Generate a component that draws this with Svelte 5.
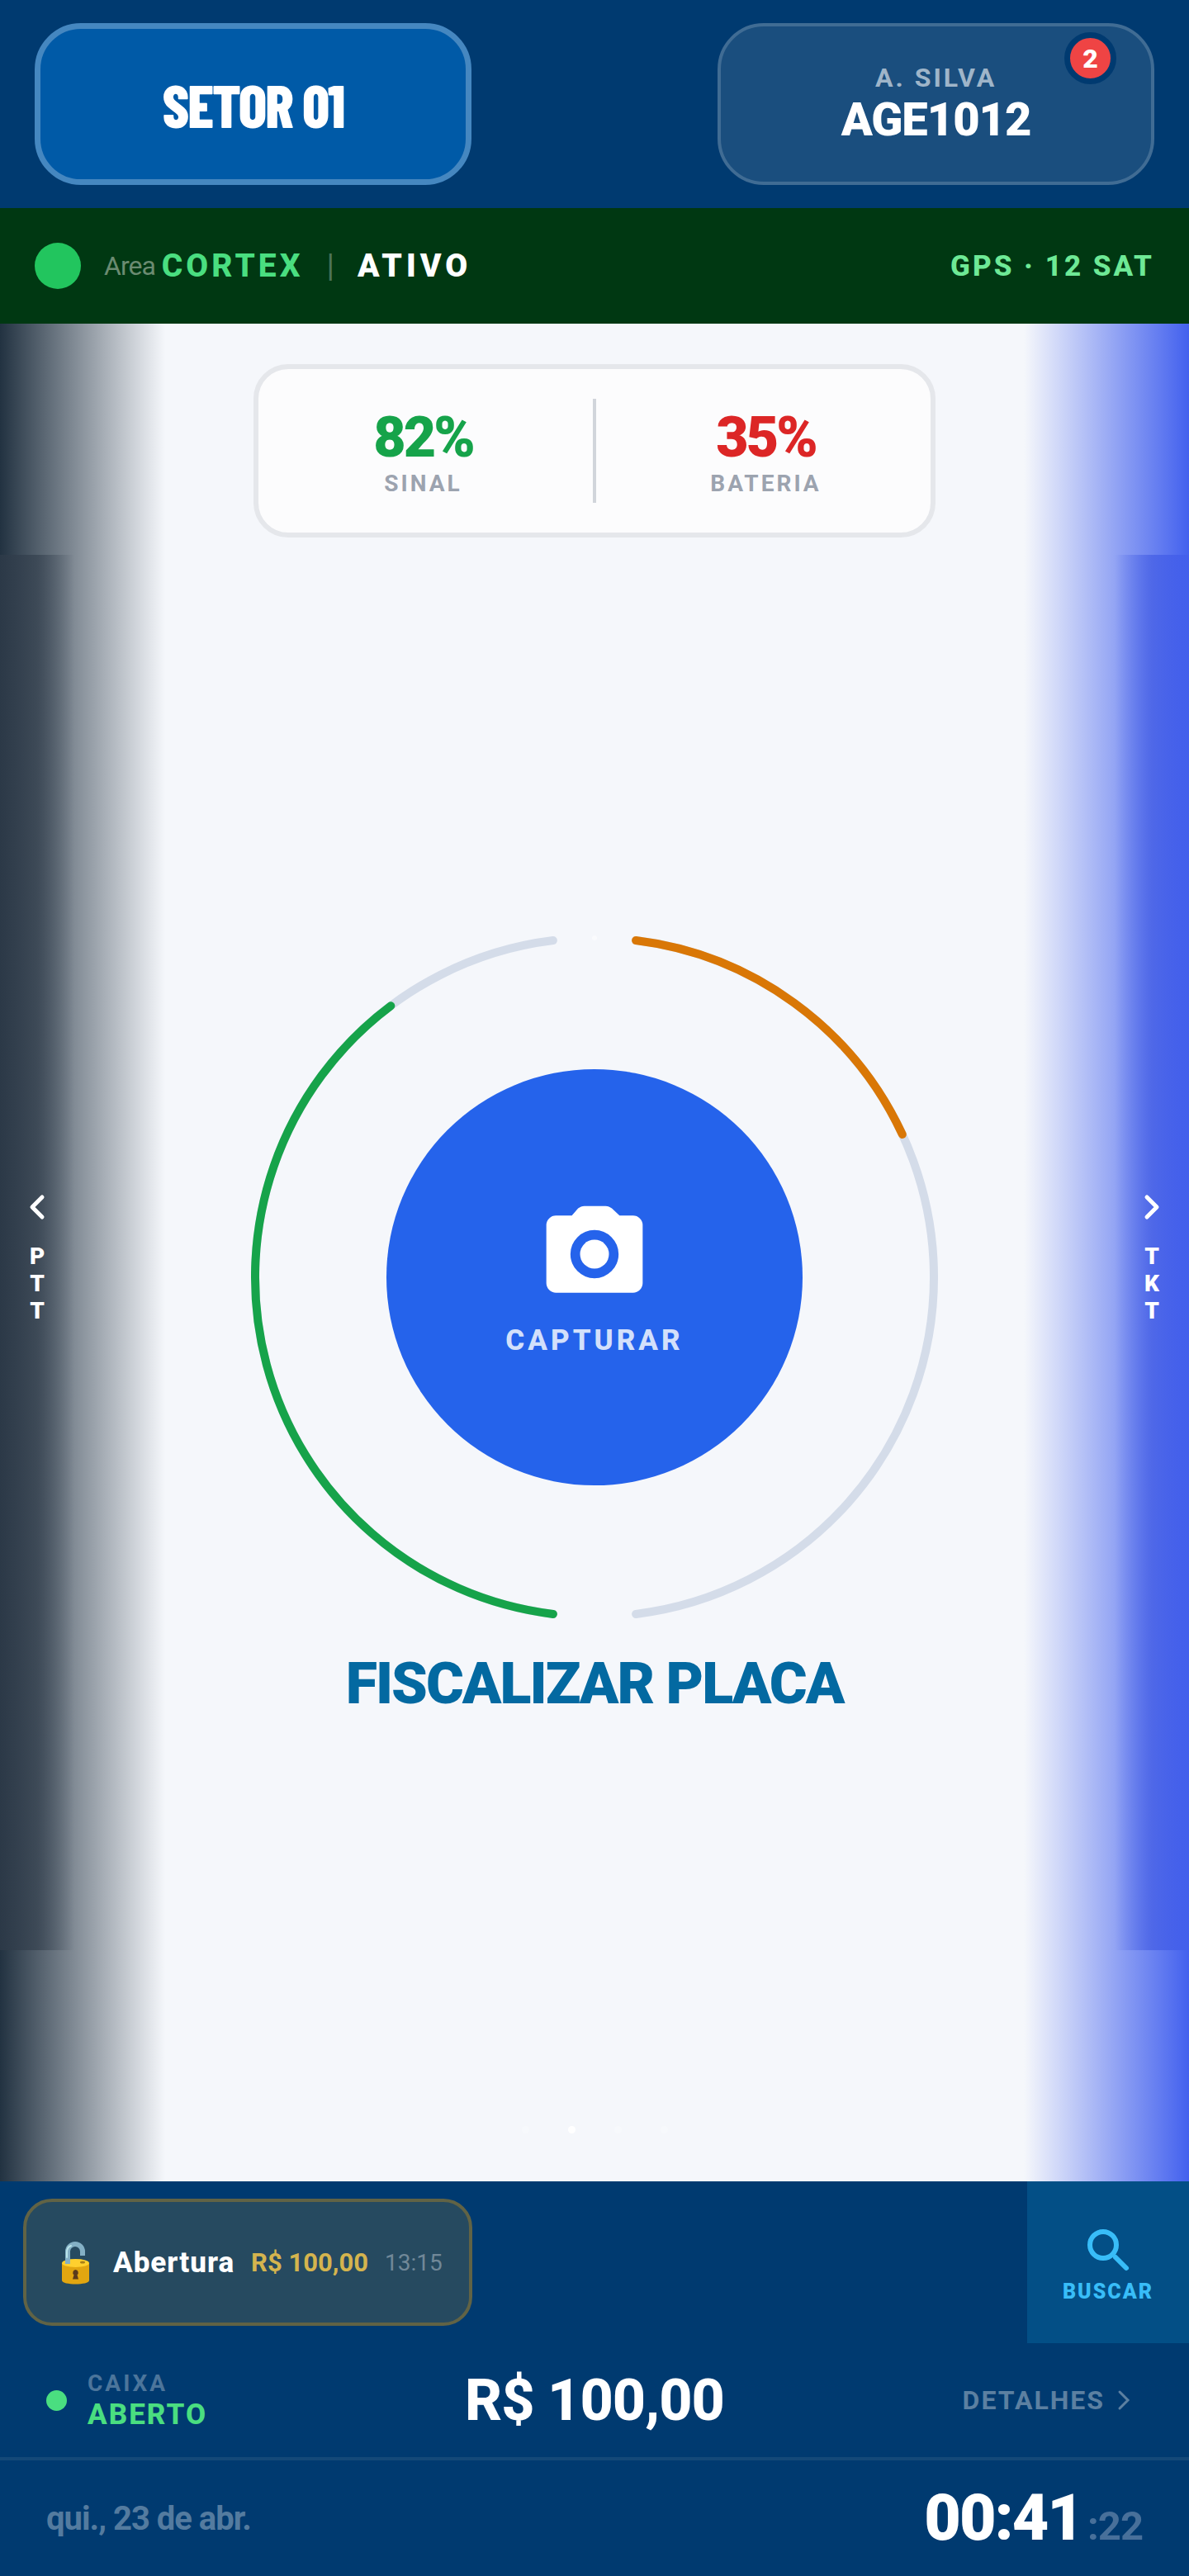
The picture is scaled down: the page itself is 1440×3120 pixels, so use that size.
<script>
	let signal = $state(82);
	let battery = $state(35);
	let activePage = $state(1);

	const pages = [0, 1, 2, 3];

	// dial geometry: two half rings with a gap at the top and bottom
	const center = 420;
	const radius = 411;
	const gap = 7;
	const span = 180 - gap * 2;

	function point(deg) {
		const rad = (deg * Math.PI) / 180;
		return `${(center + radius * Math.sin(rad)).toFixed(2)} ${(center - radius * Math.cos(rad)).toFixed(2)}`;
	}

	function arc(from, to) {
		return `M${point(from)} A${radius} ${radius} 0 0 1 ${point(to)}`;
	}

	let signalArc = $derived(arc(180 + gap, 180 + gap + (span * signal) / 100));
	let batteryArc = $derived(arc(gap, gap + (span * battery) / 100));
</script>

<div class="app">
	<header class="header">
		<button class="header-btn sector">SETOR 01</button>
		<button class="header-btn agent">
			<span class="agent-name">A. SILVA</span>
			<span class="agent-id">AGE1012</span>
			<span class="badge">2</span>
		</button>
	</header>

	<div class="status">
		<span class="status-dot"></span>
		<span class="status-area">Area</span>
		<strong class="status-name">CORTEX</strong>
		<span class="status-sep">|</span>
		<strong class="status-state">ATIVO</strong>
		<span class="status-gps">GPS · 12 SAT</span>
	</div>

	<main class="main">
		<div class="stats">
			<div class="stat">
				<span class="stat-value signal">{signal}%</span>
				<span class="stat-label">SINAL</span>
			</div>
			<div class="stat-divider"></div>
			<div class="stat">
				<span class="stat-value battery">{battery}%</span>
				<span class="stat-label">BATERIA</span>
			</div>
		</div>

		<div class="hero">
			<div class="dial">
				<svg class="ring" viewBox="0 0 840 840" fill="none" stroke-width="10" stroke-linecap="round">
					<path d={arc(180 + gap, 360 - gap)} stroke="#d4dce9" />
					<path d={arc(gap, 180 - gap)} stroke="#d4dce9" />
					<path d={signalArc} stroke="#16a34a" />
					<path d={batteryArc} stroke="#d97706" />
					<circle cx="420" cy="9" r="3" fill="#fafbfd" />
				</svg>
				<button class="capture">
					<svg viewBox="0 0 24 24" width="140" height="140" fill="#fff">
						<path fill-rule="evenodd" d="M9.9 2h4.400c.5 0 .9.2 1.300.5L17.200 4H20a2 2 0 0 1 2 2v12a2 2 0 0 1-2 2H4a2 2 0 0 1-2-2V6a2 2 0 0 1 2-2h3.300l1.300-1.500C9 2.200 9.400 2 9.900 2zM12 7a5 5 0 1 0 0 10a5 5 0 0 0 0-10z" />
						<circle cx="12" cy="12" r="3" />
					</svg>
					<span>CAPTURAR</span>
				</button>
			</div>
			<h1 class="title">FISCALIZAR PLACA</h1>
		</div>

		<div class="pager">
			{#each pages as page}
				<span class="pager-dot" class:active={page === activePage}></span>
			{/each}
		</div>

		<div class="edge edge-left"></div>
		<div class="edge edge-right"></div>
		<button class="tab tab-left" aria-label="PTT">
			<svg viewBox="0 0 24 34" width="24" height="34">
				<path d="M18 5L6 17l12 12" />
			</svg>
			<span>P<br />T<br />T</span>
		</button>
		<button class="tab tab-right" aria-label="TKT">
			<svg viewBox="0 0 24 34" width="24" height="34">
				<path d="M6 5l12 12L6 29" />
			</svg>
			<span>T<br />K<br />T</span>
		</button>
	</main>

	<footer class="footer">
		<div class="activity">
			<button class="event">
				<svg viewBox="0 0 49 56" width="49" height="56">
					<path d="M11 29v21c0 6 33 6 33 0V29z" fill="#e2a610" />
					<ellipse cx="27.500" cy="29" rx="16.500" ry="5" fill="#ffd02e" />
					<ellipse cx="36" cy="28" rx="3" ry="1.500" fill="#a87f17" />
					<path d="M18 30V15a9 9 0 0 1 18 0v5" fill="none" stroke="#84b0c5" stroke-width="6" />
					<path d="M17 22v-6c0-4 2-7 5-8" fill="none" stroke="#b9e4ea" stroke-width="2" stroke-linecap="round" />
					<path d="M27.500 37a3.500 3.500 0 0 1 2 6.200l1.500 5.300h-7l1.500-5.300a3.500 3.500 0 0 1 2-6.200z" fill="#5b3a1c" />
				</svg>
				<strong class="event-name">Abertura</strong>
				<span class="event-value">R$ 100,00</span>
				<span class="event-time">13:15</span>
			</button>
			<button class="search">
				<svg viewBox="0 0 56 56" width="56" height="56" fill="none" stroke="#38bdf8" stroke-width="6" stroke-linecap="round">
					<circle cx="22" cy="22" r="16" />
					<path d="M37 37l13 13" />
				</svg>
				<span>BUSCAR</span>
			</button>
		</div>

		<div class="cash">
			<div class="cash-status">
				<span class="cash-dot"></span>
				<div class="cash-text">
					<span class="cash-label">CAIXA</span>
					<span class="cash-state">ABERTO</span>
				</div>
			</div>
			<span class="cash-total">R$ 100,00</span>
			<button class="details">
				DETALHES
				<svg viewBox="0 0 18 26" width="18" height="26" fill="none" stroke="currentColor" stroke-width="3" stroke-linecap="round">
					<path d="M4 3l10 10L4 23" />
				</svg>
			</button>
		</div>

		<div class="clock">
			<span class="date">qui., 23 de abr.</span>
			<span class="time">00:41<span class="seconds">:22</span></span>
		</div>
	</footer>
</div>

<style>
	:global(body) {
		background: #003a70;
	}

	.app {
		display: flex;
		flex-direction: column;
		min-height: 100vh;
		font-family: Roboto, 'Liberation Sans', sans-serif;
		color: #fff;
	}

	button {
		border: 0;
		padding: 0;
		background: none;
		color: inherit;
		font-family: inherit;
		box-sizing: border-box;
		cursor: pointer;
	}

	.header {
		display: flex;
		justify-content: space-between;
		padding: 28px 42px;
		background: #003a70;
	}

	.header-btn {
		position: relative;
		display: flex;
		flex-direction: column;
		align-items: center;
		justify-content: center;
		width: 39%;
		height: 196px;
		border-radius: 56px;
	}

	.sector {
		background: #005aa7;
		border: 7px solid #4587c0;
		font-family: 'Barlow Condensed', 'Roboto Condensed', 'Liberation Sans Narrow', Roboto, sans-serif;
		font-size: 72px;
		font-weight: 800;
		letter-spacing: -2px;
	}

	.agent {
		padding-bottom: 4px;
		background: #1a4e7e;
		border: 4px solid #406c94;
	}

	.agent-name {
		font-size: 32px;
		line-height: 42px;
		font-weight: 700;
		letter-spacing: 3px;
		color: #9fb5c9;
	}

	.agent-id {
		font-size: 56px;
		line-height: 60px;
		font-weight: 900;
		letter-spacing: -1px;
	}

	.badge {
		position: absolute;
		top: 7px;
		right: 42px;
		display: flex;
		align-items: center;
		justify-content: center;
		width: 49px;
		height: 49px;
		border: 7px solid #003a70;
		border-radius: 50%;
		background: #ef4444;
		font-size: 32px;
		font-weight: 900;
	}

	.status {
		display: flex;
		align-items: center;
		height: 140px;
		padding: 0 42px;
		background: #003812;
	}

	.status-dot {
		width: 56px;
		height: 56px;
		margin-right: 28px;
		border-radius: 50%;
		background: #22c55e;
	}

	.status-area {
		margin-right: 8px;
		font-size: 32px;
		letter-spacing: -1px;
		color: #6b8b71;
	}

	.status-name,
	.status-state {
		font-size: 39px;
		font-weight: 800;
		letter-spacing: 4px;
	}

	.status-name {
		color: #4ade80;
	}

	.status-state {
		font-weight: 900;
		letter-spacing: 5px;
	}

	.status-sep {
		margin: 0 28px;
		font-size: 39px;
		color: #4d7358;
	}

	.status-gps {
		margin-left: auto;
		font-size: 35px;
		font-weight: 800;
		letter-spacing: 3px;
		color: #6ee996;
	}

	.main {
		position: relative;
		display: flex;
		flex: 1;
		flex-direction: column;
		align-items: center;
		padding: 49px 0 56px;
		background: #f5f7fb;
	}

	.stats {
		display: flex;
		align-items: center;
		gap: 6px;
		width: 58%;
		max-width: 826px;
		height: 210px;
		box-sizing: border-box;
		border: 6px solid #e5e7eb;
		border-radius: 42px;
		background: #fcfcfd;
	}

	.stat {
		display: flex;
		flex: 1;
		flex-direction: column;
		align-items: center;
		padding-top: 10px;
	}

	.stat-divider {
		width: 4px;
		height: 126px;
		background: #d1d5db;
	}

	.stat-value {
		font-size: 68px;
		line-height: 70px;
		font-weight: 900;
		letter-spacing: -3px;
	}

	.stat-value.signal {
		color: #16a34a;
	}

	.stat-value.battery {
		color: #dc2626;
	}

	.stat-label {
		font-size: 28px;
		line-height: 42px;
		font-weight: 700;
		letter-spacing: 3px;
		color: #9ca3af;
	}

	.hero {
		display: flex;
		flex: 1;
		flex-direction: column;
		align-items: center;
		justify-content: center;
		padding-bottom: 16px;
	}

	.dial {
		display: grid;
		place-items: center;
	}

	.ring,
	.capture {
		grid-area: 1 / 1;
	}

	.ring {
		width: 840px;
		height: 840px;
	}

	.capture {
		display: flex;
		flex-direction: column;
		align-items: center;
		justify-content: center;
		width: 504px;
		height: 504px;
		border-radius: 50%;
		background: #2563eb;
		font-size: 35px;
		line-height: 42px;
		font-weight: 800;
		letter-spacing: 4px;
	}

	.capture span {
		margin-top: 14px;
		color: #d3e0fb;
	}

	.title {
		margin: 30px 0 0;
		font-size: 70px;
		line-height: 84px;
		font-weight: 900;
		letter-spacing: -2px;
		color: #0369a1;
	}

	.pager {
		display: flex;
		align-items: center;
		gap: 47px;
		height: 14px;
	}

	.pager-dot {
		width: 9px;
		height: 9px;
		border-radius: 50%;
		background: #f7f9fc;
	}

	.pager-dot.active {
		background: #fff;
	}

	.edge {
		position: absolute;
		top: 0;
		bottom: 0;
		width: 200px;
		pointer-events: none;
	}

	.edge-left {
		left: 0;
		background: linear-gradient(to right, #223241, rgba(34, 50, 65, 0));
	}

	.edge-right {
		right: 0;
		background: linear-gradient(to left, #4361ee, rgba(67, 97, 238, 0));
	}

	.tab {
		position: absolute;
		top: 280px;
		bottom: 280px;
		display: flex;
		flex-direction: column;
		align-items: center;
		justify-content: center;
		gap: 26px;
		width: 90px;
		padding-top: 14px;
		font-size: 28px;
		line-height: 33px;
		font-weight: 900;
	}

	.tab path {
		fill: none;
		stroke: #fff;
		stroke-width: 5;
		stroke-linecap: round;
		stroke-linejoin: round;
	}

	.tab-left {
		left: 0;
		background: linear-gradient(to right, rgba(48, 60, 74, 0.7), rgba(48, 60, 74, 0.6) 50%, rgba(48, 60, 74, 0));
	}

	.tab-right {
		right: 0;
		background: linear-gradient(to left, rgba(67, 95, 236, 0.9), rgba(67, 93, 228, 0.7) 50%, rgba(67, 93, 228, 0));
	}

	.footer {
		background: #003a70;
	}

	.activity {
		display: flex;
		align-items: center;
		justify-content: space-between;
		padding-left: 28px;
	}

	.event {
		display: flex;
		align-items: center;
		height: 154px;
		padding: 0 32px;
		border: 4px solid #616345;
		border-radius: 35px;
		background: #264a60;
	}

	.event-name {
		margin-left: 24px;
		font-size: 35px;
		font-weight: 800;
		letter-spacing: 1px;
	}

	.event-value {
		margin-left: 20px;
		font-size: 31px;
		font-weight: 700;
		color: #d4b44e;
	}

	.event-time {
		margin-left: 20px;
		font-size: 28px;
		color: #718898;
	}

	.search {
		display: flex;
		flex-direction: column;
		align-items: center;
		justify-content: center;
		gap: 9px;
		width: 196px;
		height: 196px;
		padding-top: 6px;
		background: #034f86;
		font-size: 25px;
		line-height: 28px;
		font-weight: 900;
		letter-spacing: 2px;
		color: #38bdf8;
	}

	.cash {
		display: grid;
		grid-template-columns: 1fr auto 1fr;
		align-items: center;
		height: 138px;
		padding: 0 56px;
	}

	.cash-status {
		display: flex;
		align-items: center;
		gap: 25px;
	}

	.cash-dot {
		width: 25px;
		height: 25px;
		border-radius: 50%;
		background: #4ade80;
	}

	.cash-text {
		display: flex;
		flex-direction: column;
	}

	.cash-label {
		font-size: 28px;
		line-height: 35px;
		font-weight: 700;
		letter-spacing: 3px;
		color: #4c759b;
	}

	.cash-state {
		font-size: 35px;
		line-height: 42px;
		font-weight: 800;
		letter-spacing: 2px;
		color: #4ade80;
	}

	.cash-total {
		font-size: 70px;
		font-weight: 800;
		letter-spacing: -1px;
	}

	.details {
		display: flex;
		align-items: center;
		justify-self: end;
		gap: 14px;
		margin-right: 14px;
		font-size: 32px;
		font-weight: 700;
		letter-spacing: 2px;
		color: #5c80a1;
	}

	.clock {
		display: flex;
		align-items: center;
		justify-content: space-between;
		height: 140px;
		padding: 0 56px;
		border-top: 4px solid #144878;
	}

	.date {
		font-size: 40px;
		font-weight: 700;
		letter-spacing: -1px;
		color: #547b9f;
	}

	.time {
		font-size: 77px;
		font-weight: 900;
		letter-spacing: -2px;
	}

	.seconds {
		margin-left: 6px;
		font-size: 49px;
		font-weight: 700;
		letter-spacing: -1px;
		color: #48709a;
	}
</style>
